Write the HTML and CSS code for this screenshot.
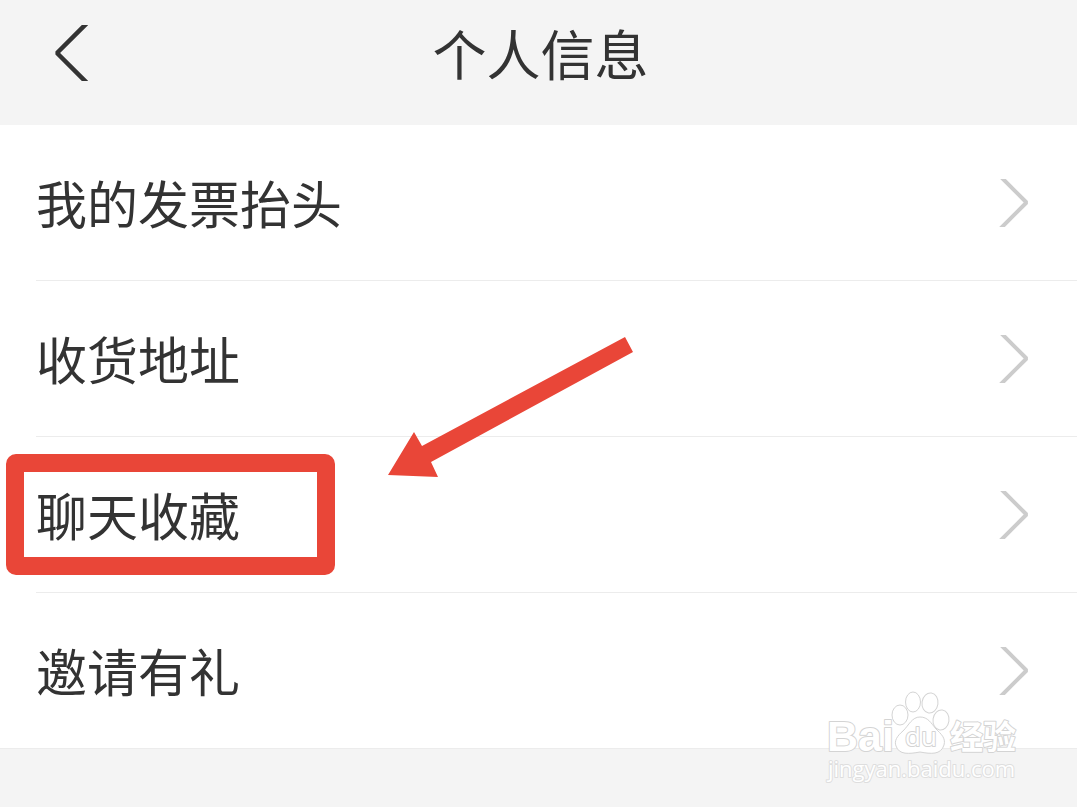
FILE: index.html
```html
<!DOCTYPE html>
<html lang="zh-CN">
<head>
    <meta charset="UTF-8">
    <meta name="viewport" content="width=device-width, initial-scale=1.0">
    <title>个人信息</title>
    <link rel="stylesheet" href="styles.css">
</head>
<body>
    <header class="header">
        <button class="back" type="button" aria-label="返回">
            <svg width="34" height="56" viewBox="0 0 34 56">
                <path d="M36 -5 L3 28 L36 61" fill="none" stroke="#333" stroke-width="4.5" stroke-linejoin="bevel"/>
            </svg>
        </button>
        <h1 class="title">个人信息</h1>
    </header>

    <main class="content">
        <nav class="list">
            <a class="row" href="#invoice">
                <span>我的发票抬头</span>
                <svg class="chevron" width="30" height="48" viewBox="0 0 30 48">
                    <path d="M0 -4 L27.5 23.5 L0 51"/>
                </svg>
            </a>
            <a class="row" href="#address">
                <span>收货地址</span>
                <svg class="chevron" width="30" height="48" viewBox="0 0 30 48">
                    <path d="M0 -4 L27.5 23.5 L0 51"/>
                </svg>
            </a>
            <a class="row marked" href="#favorites">
                <span>聊天收藏</span>
                <svg class="chevron" width="30" height="48" viewBox="0 0 30 48">
                    <path d="M0 -4 L27.5 23.5 L0 51"/>
                </svg>
            </a>
            <a class="row" href="#invite">
                <span>邀请有礼</span>
                <svg class="chevron" width="30" height="48" viewBox="0 0 30 48">
                    <path d="M0 -4 L27.5 23.5 L0 51"/>
                </svg>
            </a>
        </nav>

        <!-- Arrow pointing at the marked row -->
        <svg class="arrow" width="246" height="142" viewBox="0 0 246 142">
            <path d="M0 139 L26 96 L34 110 L237 1 L245 16 L43 126 L50 141 Z" fill="#e94638"/>
        </svg>

        <!-- Watermark -->
        <svg class="watermark" width="200" height="96" viewBox="0 0 200 96">
            <g class="outline">
                <text class="brand" x="4" y="60">Bai</text>
                <ellipse cx="77" cy="24" rx="8" ry="10"/>
                <ellipse cx="90" cy="11" rx="7.5" ry="10"/>
                <ellipse cx="107" cy="12" rx="8" ry="10" transform="rotate(8 107 12)"/>
                <ellipse cx="118" cy="29" rx="8" ry="10" transform="rotate(8 118 29)"/>
                <path d="M97 26 C89 26 86 34 80 40 C74 45 71 50 73 55 C76 64 86 63 97 61 C108 63 118 64 121 54 C123 47 118 43 113 38 C108 32 105 26 97 26 Z"/>
                <text class="du" x="82" y="55">du</text>
                <text class="name" x="127" y="58">经验</text>
            </g>
            <text class="site" x="5" y="86">jingyan.baidu.com</text>
        </svg>
    </main>
</body>
</html>
```
FILE: styles.css
```css
* {
    box-sizing: border-box;
}

body {
    margin: 0;
    min-height: 100vh;
    background-color: #f4f4f4;
    color: #333;
    font-family: "Noto Sans CJK SC", sans-serif;
}

.header {
    display: grid;
    grid-template-columns: 88px 1fr 84px;
    align-items: center;
    padding-bottom: 19px;
    background-color: #f4f4f4;
}

.back {
    display: flex;
    justify-content: flex-end;
    padding: 0;
    border: 0;
    background: none;
    cursor: pointer;
}

.title {
    margin: 0;
    font-size: 54px;
    font-weight: 400;
    line-height: 106px;
    text-align: center;
}

.content {
    position: relative;
    padding-bottom: 58px;
}

.list {
    background-color: #fff;
    border-bottom: 1px solid #ececec;
}

.row {
    position: relative;
    display: flex;
    align-items: center;
    justify-content: space-between;
    margin-left: 36px;
    padding-right: 48px;
    color: #333;
    font-size: 51px;
    line-height: 155px;
    text-decoration: none;
    border-bottom: 1px solid #ececec;
}

.row:last-child {
    border-bottom: 0;
}

.chevron path {
    fill: none;
    stroke: #ccc;
    stroke-width: 4;
    stroke-linejoin: bevel;
}

/* Red frame around the marked row's label */
.marked::before {
    content: "";
    box-sizing: border-box;
    position: absolute;
    top: 17px;
    left: -30px;
    width: 329px;
    height: 121px;
    border: 18px solid #e94638;
    border-radius: 10px;
}

.arrow {
    position: absolute;
    top: 211px;
    left: 388px;
}

.watermark {
    position: absolute;
    right: 54px;
    bottom: 20px;
}

.outline {
    fill: #fff;
    stroke: #d4d4d4;
    stroke-width: 1;
}

.outline text {
    stroke-width: 2;
    stroke-linejoin: round;
    paint-order: stroke;
}

.brand {
    font: bold 43px "Liberation Sans", sans-serif;
}

.du {
    font: 26px "Open Sans", sans-serif;
}

.name {
    font: bold 33px "Noto Sans CJK SC", sans-serif;
}

.site {
    font: 22px "Open Sans", sans-serif;
    fill: #fff;
    stroke: #dedede;
    stroke-width: 2;
    stroke-linejoin: round;
    paint-order: stroke;
}
```
